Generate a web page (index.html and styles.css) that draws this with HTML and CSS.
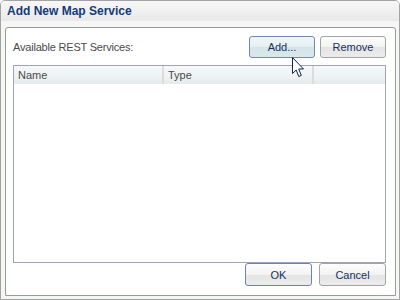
FILE: index.html
```html
<!DOCTYPE html>
<html lang="en">
<head>
    <meta charset="UTF-8">
    <title>Add New Map Service</title>
    <link rel="stylesheet" href="styles.css">
</head>
<body>
    <div class="window">
        <div class="title-bar">Add New Map Service</div>
        <div class="panel">
            <div class="toolbar">
                <span class="label">Available REST Services:</span>
                <button class="btn btn-hover">Add...</button>
                <button class="btn">Remove</button>
            </div>
            <div class="grid">
                <div class="grid-header">
                    <div class="col col-name">Name</div>
                    <div class="col col-type">Type</div>
                    <div class="col col-rest"></div>
                </div>
                <div class="grid-body"></div>
            </div>
            <div class="footer">
                <button class="btn btn-default">OK</button>
                <button class="btn">Cancel</button>
            </div>
        </div>

        <!-- mouse pointer over the Add button -->
        <svg class="cursor" width="13" height="21" viewBox="0 0 13 21">
            <path d="M0.5 0.5 L0.5 16.5 L4.2 13 L6.8 19.5 L9.3 18.4 L6.7 12 L11.5 12 Z" fill="#fff" stroke="#0f2452" stroke-width="1" stroke-linejoin="miter"/>
        </svg>
    </div>
</body>
</html>
```

FILE: styles.css
```css
body {
    margin: 0;
    font-family: "Liberation Sans", Arial, sans-serif;
    font-size: 11px;
    background-color: #fff;
}

.window {
    position: relative;
    width: 400px;
    height: 300px;
    box-sizing: border-box;
    border: 1px solid #a3a3a3;
    border-radius: 5px 5px 0 0;
    background-color: #f6f6f6;
    display: flex;
    flex-direction: column;
}

.title-bar {
    height: 20px;
    line-height: 20px;
    padding-left: 6px;
    font-size: 12px;
    font-weight: bold;
    color: #15397a;
    background: linear-gradient(#f7f7f7, #e9e9e9);
    border-radius: 4px 4px 0 0;
}

.panel {
    flex: 1;
    margin: 6px 3px 3px 4px;
    padding: 8px 9px 7px 7px;
    background-color: #fff;
    border: 1px solid #8fa38a;
    border-radius: 3px 3px 0 0;
    display: flex;
    flex-direction: column;
}

.toolbar {
    height: 22px;
    display: flex;
    align-items: center;
    gap: 5px;
}

.label {
    flex: 1;
    color: #4a4a4a;
    letter-spacing: -0.2px;
}

.btn {
    width: 66px;
    height: 22px;
    padding: 0;
    font-family: inherit;
    font-size: 11px;
    color: #15315f;
    border: 1px solid #a3a3a3;
    border-radius: 3px;
    background: linear-gradient(#fdfdfd 0%, #f3f3f3 50%, #e4e4e4 51%, #ececec 100%);
}

.btn-hover {
    border-color: #7288ad;
    background: linear-gradient(#f0f6f8 0%, #e5eff2 50%, #d3e4e8 51%, #dbe8eb 100%);
}

.btn-default {
    border-color: #6f80b3;
}

.grid {
    margin-top: 7px;
    height: 198px;
    box-sizing: border-box;
    border: 1px solid #a4a1bd;
    display: flex;
    flex-direction: column;
}

.grid-header {
    height: 18px;
    display: flex;
    background: linear-gradient(#f5f8f8 0%, #eef3f3 55%, #e5ebeb 100%);
}

.col {
    box-sizing: border-box;
    padding-left: 4px;
    line-height: 18px;
    color: #4a4a4a;
    border-right: 2px solid #dcdcdc;
}

.col-name {
    width: 150px;
}

.col-type {
    width: 150px;
}

.col-rest {
    flex: 1;
    border-right: none;
}

.grid-body {
    flex: 1;
}

.footer {
    height: 23px;
    display: flex;
    justify-content: flex-end;
    gap: 7px;
}

.footer .btn {
    width: 67px;
    height: 23px;
}

.cursor {
    position: absolute;
    left: 291px;
    top: 56px;
}
```
